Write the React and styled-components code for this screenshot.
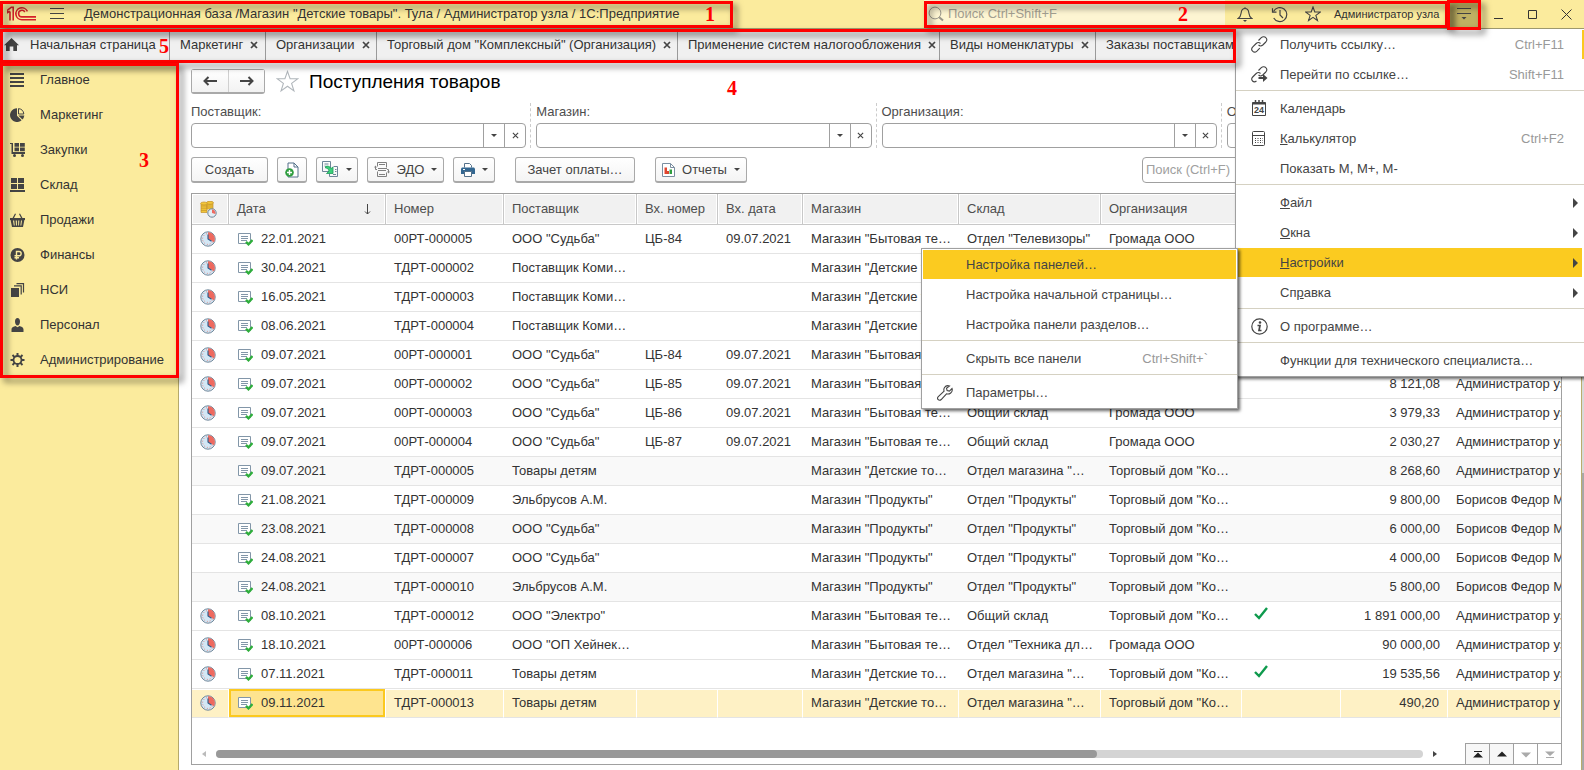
import React from 'react';
import styled, { createGlobalStyle } from 'styled-components';

const GlobalStyle = createGlobalStyle`
    * {
        box-sizing: border-box;
    }
    body {
        margin: 0;
        background: #fff;
        color: #333;
        font-family: "Liberation Sans", Arial, sans-serif;
        font-size: 13px;
        line-height: 16px;
    }
    button, input {
        font: inherit;
        color: inherit;
        margin: 0;
    }
    button {
        padding: 0;
    }
    svg {
        display: block;
        flex: none;
    }
`

const Page = styled.div`
    position: relative;
    display: flex;
    flex-direction: column;
    min-height: 100vh;
    overflow: hidden;
`

// red frames with numbers over the parts of the window
const Marker = styled.div`
    position: absolute;
    top: ${p => p.$top || 0}px;
    right: ${p => p.$right || 0}px;
    bottom: ${p => p.$bottom || 0}px;
    left: 0;
    z-index: 10;
    border: 3px solid #f00;
    filter: drop-shadow(4px 4px 3px rgba(0, 0, 0, 0.55));
    pointer-events: none;
`
const MarkerNumber = styled.span`
    position: absolute;
    top: ${p => p.$top}px;
    left: ${p => p.$left}px;
    z-index: 11;
    color: #f00;
    font-family: "Liberation Serif", "Times New Roman", serif;
    font-size: 20px;
    font-weight: bold;
    line-height: 20px;
`

/* title bar */
const TitleBar = styled.header`
    display: flex;
    justify-content: space-between;
    height: 29px;
    padding-right: 1px;
    background: #fbeb9d;
    border-bottom: 1px solid #a39d72;
`
const TitleLeft = styled.div`
    position: relative;
    display: flex;
    align-items: center;
    gap: 3px;
    width: 733px;
    padding-left: 7px;
    white-space: nowrap;
`
const TitleText = styled.h1`
    margin: 0 0 0 7px;
    font-size: 13px;
    font-weight: normal;
`
const TitleRight = styled.div`
    display: flex;
`
const Tools = styled.div`
    position: relative;
    display: flex;
    align-items: center;
    width: 524px;
`
const GlobalSearch = styled.label`
    display: flex;
    align-items: center;
    gap: 4px;
    flex: none;
    width: 301px;
    height: 28px;
    margin-right: 3px;
    padding-left: 4px;
    background: #fdf5d2;

    input {
        flex: 1;
        min-width: 0;
        padding: 0;
        border: 0;
        outline: 0;
        background: none;
    }
    input::placeholder {
        color: #a3a091;
    }
`
const BarButton = styled.button`
    display: flex;
    align-items: center;
    justify-content: center;
    flex: none;
    width: 34px;
    height: 28px;
    border: 0;
    background: ${p => p.$active ? '#bfb063' : 'none'};
`
const UserName = styled.button`
    padding: 0 4px;
    border: 0;
    background: none;
    font-size: 11px;
    white-space: nowrap;
`
const MenuHolder = styled.div`
    position: relative;
    height: 30px;
    margin-left: -1px;
`

/* open windows */
const TabBar = styled.nav`
    position: relative;
    height: 33px;
    background: #f0f0f0;
`
const TabList = styled.div`
    display: flex;
    height: 32px;
    overflow: hidden;
`
const Tab = styled.div`
    display: flex;
    align-items: center;
    gap: 7px;
    flex: none;
    width: ${p => p.$width}px;
    padding: 0 8px 0 ${p => p.$home ? 4 : 10}px;
    border-right: 1px solid #9a9a9a;
    white-space: nowrap;
`
const TabLink = styled.a`
    display: flex;
    flex: 1;
    align-items: center;
    gap: 11px;
    color: inherit;
    text-decoration: none;
`
const TabClose = styled.button`
    border: 0;
    background: none;
`

const Body = styled.div`
    display: flex;
    flex: 1;
`
const Sidebar = styled.nav`
    width: 179px;
    background: #fbeb9d;
    border-right: 1px solid #b5a96b;
`
const SectionList = styled.ul`
    position: relative;
    margin: 0;
    padding: 0;
    list-style: none;
`
const SectionLink = styled.a`
    display: flex;
    align-items: center;
    gap: 14px;
    height: 35px;
    padding-left: 10px;
    color: #333;
    text-decoration: none;
`

/* document list */
const Main = styled.main`
    position: relative;
    display: flex;
    flex: 1;
    flex-direction: column;
    min-width: 0;
    padding: 7px 19px 5px 12px;
`
const EdgeStrip = styled.div`
    width: 3px;
    background: linear-gradient(#d9d9d9 58%, #a8a8a8 58%);
    border-left: 1px solid #b9ad6c;
`
const HeadRow = styled.div`
    display: flex;
    align-items: center;
    height: 25px;
`
const NavButtons = styled.div`
    display: flex;
    height: 25px;
    border: 1px solid #a9a9a9;
    border-bottom: 2px solid #a9a9a9;
    border-radius: 3px;

    button {
        display: flex;
        align-items: center;
        justify-content: center;
        width: 36px;
        border: 0;
        background: linear-gradient(#fff, #f2f2f2);
    }
    button + button {
        border-left: 1px solid #d0d0d0;
    }
`
const StarButton = styled.button`
    margin: 0 10px 0 11px;
    border: 0;
    background: none;
`
const PageTitle = styled.h2`
    margin: 0;
    color: #000;
    font-size: 19px;
    font-weight: normal;
    line-height: 24px;
`
const Filters = styled.div`
    display: grid;
    grid-template-columns: repeat(4, 1fr);
    gap: 10px;
    margin-top: 9px;
`
const Filter = styled.div`
    position: relative;
    color: #4d4d4d;

    label {
        display: block;
        margin-bottom: 2px;
        line-height: 18px;
    }
    & + &::before {
        content: '';
        position: absolute;
        top: 0;
        bottom: 0;
        left: -6px;
        border-left: 1px dashed #ccc;
    }
`
const Combo = styled.div`
    display: flex;
    height: 25px;
    border: 1px solid #a0a0a0;
    border-radius: 4px;

    input {
        flex: 1;
        min-width: 0;
        padding: 0 6px;
        border: 0;
        outline: 0;
        background: none;
    }
    button {
        display: flex;
        align-items: center;
        justify-content: center;
        width: 21px;
        border: 0;
        border-left: 1px solid #a0a0a0;
        background: none;
    }
`
const Toolbar = styled.div`
    display: flex;
    height: 26px;
    margin-top: 9px;
`
const ToolButton = styled.button`
    display: flex;
    align-items: center;
    justify-content: center;
    gap: 7px;
    width: ${p => p.$width}px;
    margin-right: ${p => p.$space || 9}px;
    border: 1px solid #a9a9a9;
    border-bottom: 2px solid #a9a9a9;
    border-radius: 3px;
    background: linear-gradient(#fff, #f4f4f4);
    color: #444;
`
const ListSearch = styled.input`
    width: 420px;
    margin-left: auto;
    padding: 0 3px;
    border: 1px solid #a0a0a0;
    border-radius: 4px;

    &::placeholder {
        color: #a0a0a0;
    }
`
const TableFrame = styled.div`
    display: flex;
    flex: 1;
    flex-direction: column;
    justify-content: space-between;
    margin-top: 10px;
    border: 1px solid #a0a0a0;
    overflow: hidden;
`
const Table = styled.table`
    width: 100%;
    border-collapse: separate;
    border-spacing: 0;
    table-layout: fixed;

    th, td {
        padding: 0 0 0 8px;
        overflow: hidden;
        text-align: left;
        white-space: nowrap;
    }
    th {
        height: 31px;
        border-right: 1px solid #c8c8c8;
        border-bottom: 1px solid #c8c8c8;
        background: #f1f1f1;
        box-shadow: inset 0 0 0 1px #fff;
        color: #4d4d4d;
        font-weight: normal;
    }
    td {
        height: 29px;
        border-bottom: 1px solid #e4e4e4;
    }
`
const Row = styled.tr`
    background: ${p => p.$shaded ? '#f9f9f9' : '#fff'};

    ${p => p.$selected && `
        td {
            background: #fef1c5;
            border-right: 1px solid #fff;
            box-shadow: inset 0 1px 0 #fff;
        }
        td:nth-child(2) {
            background: #fee48f;
            box-shadow: inset 0 0 0 2px #fbc91f;
        }
    `}
`
const CellLine = styled.div`
    display: flex;
    align-items: center;
    justify-content: ${p => p.$spread ? 'space-between' : 'flex-start'};
    gap: 8px;
    padding-right: 14px;
`
const Amount = styled.div`
    padding-right: 8px;
    text-align: right;
`
const Paid = styled.div`
    padding: 0 0 5px 4px;
`
const ScrollRow = styled.div`
    display: flex;
    align-items: center;
    height: 21px;
    padding-left: 10px;
`
const ScrollTrack = styled.div`
    flex: 1;
    height: 8px;
    margin: 0 10px;
    border-radius: 4px;
    background: #d4d4d4;
`
const ScrollThumb = styled.div`
    width: 73%;
    height: 8px;
    border-radius: 4px;
    background: #999;
`
const PageButtons = styled.div`
    display: flex;
    margin-left: 28px;
    border-top: 1px solid #a0a0a0;

    button {
        display: flex;
        align-items: center;
        justify-content: center;
        width: 24px;
        height: 21px;
        border: 0;
        border-left: 1px solid #a0a0a0;
        background: #f7f7f7;
    }
    button:disabled {
        background: #fff;
    }
`

/* service menu */
const Menu = styled.div`
    position: absolute;
    top: 29px;
    right: 0;
    z-index: 2;
    width: 349px;
    padding-bottom: 1px;
    border: 1px solid #a0a0a0;
    border-top: 0;
    border-right: 0;
    background: #fff;
    box-shadow: 2px 2px 3px rgba(0, 0, 0, 0.6);

    &::after {
        content: '';
        position: absolute;
        top: 1px;
        right: 0;
        width: 2px;
        height: 29px;
        background: #fbc91f;
    }
`
const SubMenu = styled.div`
    position: absolute;
    top: 219px;
    right: 346px;
    width: 317px;
    padding-bottom: 1px;
    border: 1px solid #a0a0a0;
    background: #fff;
    box-shadow: 2px 2px 3px rgba(0, 0, 0, 0.6);
`
const MenuItem = styled.button`
    display: flex;
    align-items: center;
    width: calc(100% - ${p => p.$sub ? 2 : 3}px);
    height: 29px;
    margin: 1px ${p => p.$sub ? 1 : 2}px 0 1px;
    padding: 0 ${p => p.$sub ? 28 : p.$arrow ? 4 : 18}px 0 14px;
    border: 0;
    background: ${p => p.$active ? '#fbcb20' : 'none'};
    color: #444;
    text-align: left;
    white-space: nowrap;
`
const MenuIcon = styled.span`
    width: 29px;
`
const MenuText = styled.span`
    flex: 1;
`
const Shortcut = styled.span`
    color: #999;
`
const MenuLine = styled.hr`
    height: 1px;
    margin: 1px 0 3px;
    border: 0;
    background: #d5d1c2;
`

/* icons */
function Logo(){
    return (
        <svg width="30" height="16" viewBox="0 0 30 16" fill="none" stroke="#d3222a" strokeWidth="1.6">
            <path d="M0.5 4.2 4.4 1.2H6.2V14.5M3 5.4V14.5M0.5 4.2V6.6L3 5.2" />
            <path d="M20.4 5.4A6 6 0 1 0 15.2 13.8H29" />
            <path d="M17.8 6A3.3 3.3 0 1 0 15.2 10.9H29" />
        </svg>
    )
}

const Burger = () => (
    <svg width="14" height="12" viewBox="0 0 14 12" stroke="#444">
        <path d="M0 .5h14M0 5.5h14M0 10.5h14" />
    </svg>
)

const SearchIcon = () => (
    <svg width="16" height="16" viewBox="0 0 16 16" fill="none" stroke="#99968a">
        <circle cx="7" cy="7" r="5.9" />
        <path d="M11.2 11.2l3.8 3.4" strokeWidth="2" />
    </svg>
)

const Bell = () => (
    <svg width="16" height="16" viewBox="0 0 16 16" fill="none" stroke="#444" strokeWidth="1.1">
        <path d="M8 1.2v1.2M1.2 12.5h13.6c-2.2-1.3-2.6-2.8-2.9-5.4C11.6 4.2 10.2 2.500 8 2.500S4.400 4.200 4.100 7.100C3.800 9.700 3.400 11.200 1.200 12.500z" />
        <path d="M6 14h4l-2 2z" fill="#444" stroke="none" />
    </svg>
)

const History = () => (
    <svg width="17" height="17" viewBox="0 0 17 17" fill="none" stroke="#444" strokeWidth="1.2">
        <path d="M2.500 5.500A7 7 0 1 1 2.700 12" />
        <path d="M1.500 2.200v4h4M9 4v5l3 3" />
    </svg>
)

function Star({size, color}){
    return (
        <svg width={size} height={size} viewBox="0 0 24 24" fill="none" stroke={color} strokeWidth={24 / size * 1.1}>
            <path d="M12 1.500l2.700 7.500 8.100.1-6.500 4.900 2.400 7.800L12 17l-6.700 4.800 2.400-7.800-6.500-4.900 8.100-.1z" />
        </svg>
    )
}

const ServiceIcon = () => (
    <svg width="14" height="14" viewBox="0 0 14 14" stroke="#444">
        <path d="M0 1.500h14M0 6.500h14" />
        <path d="M4.500 10h5L7 12.500z" fill="#444" stroke="none" />
    </svg>
)

const WINDOW_PATHS = {
    minimize: 'M1 9.500h9',
    maximize: 'M1.500 1.500h8v8h-8z',
    close: 'M.5.5l10 10M10.500.5l-10 10',
}
const WindowIcon = ({kind}) => (
    <svg width="11" height="11" viewBox="0 0 11 11" fill="none" stroke="#333">
        <path d={WINDOW_PATHS[kind]} />
    </svg>
)

const Home = () => (
    <svg width="15" height="14" viewBox="0 0 15 14" fill="#444">
        <path d="M7.500 0 15 7.200H13V13H9.300V8.500H5.700V13H2V7.200H0L5 2.400z" />
    </svg>
)

const Cross = ({size, color = '#444', width = 1.7}) => (
    <svg width={size} height={size} viewBox="0 0 8 8" stroke={color} strokeWidth={width}>
        <path d="M1 1l6 6M7 1L1 7" />
    </svg>
)

const Caret = () => (
    <svg width="6" height="3" viewBox="0 0 6 3" fill="#444"><path d="M0 0h6L3 3z" /></svg>
)

const Arrow = ({left}) => (
    <svg width="15" height="10" viewBox="0 0 15 10" fill="none" stroke="#444" strokeWidth="2">
        <path d={left ? 'M14 5H2M5.500 1 1.500 5l4 4' : 'M1 5h12M9.500 1l4 4-4 4'} />
    </svg>
)

const SECTION_ICONS = {
    main: <path d="M0 0h14v2H0zM0 4h14v2H0zM0 8h14v2H0zM0 12h14v2H0z" />,
    pie: <>
        <path d="M7 .2A6.900 6.900 0 1 0 11.600 12.200L7 7.700z" />
        <path d="M8.500.6a6 6 0 0 1 5.300 5.400H8.500z" fill="none" stroke="#444" />
        <path d="M8.300 7.400h6a6.500 6.500 0 0 1-1.900 4.100z" />
    </>,
    cart: <>
        <path d="M0 0h3v9h12v2H1.500V1H0zM4.500 0h4.500v3.800H4.500zM10 0h4.800v3.800H10zM4.500 4.600h4.500V8.200H4.500zM10 4.600h4.800V8.200H10z" />
        <circle cx="4.500" cy="12.500" r="1.500" /><circle cx="12.500" cy="12.500" r="1.500" />
    </>,
    store: <path d="M1 0h6v5H1zM8 0h6v5H8zM1 6h6v5H1zM8 6h6v5H8zM0 12h15v2H0z" />,
    basket: <path fillRule="evenodd" d="M0 5h2.500L5 .5l1 .6L4 5h7L9 1.100l1-.6L12.500 5H15v2h-.6L13 14H2L.6 7H0zM3 7.500l.8 5h.9l-.5-5zM5.700 7.500l.3 5h.9v-5zM8.200 7.500v5H9l.3-5zM11 7.500l-.6 5h.9l.7-5z" />,
    ruble: <>
        <circle cx="7.500" cy="7" r="7" />
        <path d="M6.500 11.500V3.500H9a2.100 2.100 0 0 1 0 4.300H4.500M4.500 9.800h4.500" fill="none" stroke="#fbeb9d" strokeWidth="1.400" />
    </>,
    books: <>
        <path d="M1 5h8v9H1z" />
        <path d="M4 2.800h7.200V11.500M6.500.6h7v9" fill="none" stroke="#444" strokeWidth="1.200" />
    </>,
    person: <path d="M5 3.500C5 1.200 6 0 7.500 0S10 1.200 10 3.500 9 7.500 7.500 7.500 5 5.500 5 3.500zM1.500 14v-2.500C1.500 9 4 8.500 5.500 8l2 1.200 2-1.200c1.500.5 4 1 4 3.500V14z" />,
    gear: <>
        <circle cx="7.500" cy="7" r="4" fill="none" stroke="#444" strokeWidth="1.800" />
        <path d="M7.500 0v3M7.500 11v3M.5 7h3M11.500 7h3M2.500 2l2.100 2.100M10.400 9.900l2.100 2.100M12.500 2l-2.100 2.100M4.600 9.900 2.500 12" stroke="#444" strokeWidth="2" />
    </>,
}
const SectionIcon = ({name}) => (
    <svg width="16" height="14" viewBox="0 0 16 14" fill="#444">{SECTION_ICONS[name]}</svg>
)

const Clock = () => (
    <svg width="16" height="16" viewBox="0 0 16 16">
        <circle cx="8" cy="8" r="7.200" fill="#d3e7f5" stroke="#72889a" />
        <path d="M8 8V1.200A6.800 6.800 0 0 1 14 11.200z" fill="#f0685d" />
        <circle cx="8" cy="8" r="5.400" fill="none" stroke="#dd7a74" strokeDasharray=".9 1.930" />
        <path d="M8 3.500V8l3.500 2.200" fill="none" stroke="#2b5a88" strokeWidth="1.100" />
    </svg>
)

const Coins = () => (
    <svg width="17" height="17" viewBox="0 0 17 17">
        <g fill="#f3c73a" stroke="#c3922b" strokeWidth=".7">
            <path d="M1 2.500h6v9H1z" /><path d="M7 1h6v7H7z" />
            <ellipse cx="4" cy="2.500" rx="3.300" ry="1.500" /><ellipse cx="10" cy="1.800" rx="3.300" ry="1.500" />
            <path d="M1 5h6M1 7.200h6M1 9.400h6M7 4h6M7 6h6" />
        </g>
        <circle cx="12" cy="12" r="4.200" fill="#e3edf4" stroke="#6d8598" />
        <path d="M12 12V8.500A3.500 3.500 0 0 1 15.300 13z" fill="#ee6a60" />
    </svg>
)

const Posted = () => (
    <svg width="16" height="13" viewBox="0 0 16 13" fill="none">
        <path d="M1.500.5h12v10h-12z" fill="#fff" stroke="#8296a8" />
        <path d="M4 3.500h7M4 5.500h7M4 7.500h6" stroke="#8296a8" />
        <path d="M9 8.800l2.500 2.500L15.500 7" stroke="#2fae3c" strokeWidth="2.400" />
    </svg>
)

const AddDoc = () => (
    <svg width="14" height="16" viewBox="0 0 14 16" fill="none">
        <path d="M3 1h6l4 4v10H3z" fill="#fff" stroke="#54718a" />
        <path d="M9 1v4h4" stroke="#54718a" />
        <circle cx="4.500" cy="10.500" r="4.300" fill="#2f9e3f" />
        <path d="M4.500 8v5M2 10.500h5" stroke="#fff" strokeWidth="1.400" />
    </svg>
)

const BaseOn = () => (
    <svg width="17" height="17" viewBox="0 0 17 17" fill="none" stroke="#6d8598">
        <path d="M.5.5h8v10h-8zM2.500 3h4M2.500 5h1" />
        <path d="M11.500 5.500h4v10h-8v-3M13 8.500h1.500M13 10.500h1.500M11 13.500h3" />
        <path d="M3.500 5.500c2.500-1 4.500 0 5.500 2L11 6v6.500H4.500L7 10C6.500 8 5.500 7 3.500 7z" fill="#3bd07a" stroke="#1f9a5a" strokeWidth=".8" />
    </svg>
)

const Edo = () => (
    <svg width="16" height="15" viewBox="0 0 16 15" fill="none" stroke="#808080">
        <path d="M3.500 4.500v-4h9v5M12.500 10.500v4h-9v-5M5 2.500h6M5 12.500h6M4 6.500h9M4 8.500h8" />
        <path d="M3 7.500H1.500V5M13 7.500h1.500V10" />
        <path d="M0 5.500h3L1.500 3.500zM13 9.500h3l-1.500 2z" fill="#808080" stroke="none" />
    </svg>
)

const Printer = () => (
    <svg width="14" height="14" viewBox="0 0 14 14">
        <path d="M3.500 4.500v-4h5l2 2v2" fill="#fff" stroke="#54718a" />
        <path d="M0 5.500 1 4.500h12l1 1V11H0z" fill="#336791" />
        <path d="M3.500 8.500h7v5h-7z" fill="#fff" stroke="#54718a" />
        <path d="M2 6.500h2" stroke="#fff" />
    </svg>
)

const Report = () => (
    <svg width="13" height="14" viewBox="0 0 13 14" fill="none">
        <path d="M.5.5h8l4 4v9H.5z" fill="#fff" stroke="#7a8ea0" />
        <path d="M8.500.5v4h4" stroke="#7a8ea0" />
        <path d="M2.500 11V4.500h2.500V11z" fill="#e0452f" /><path d="M5 11V8h2v3z" fill="#d8452f" /><path d="M7.500 11V6.500H10V11z" fill="#2f9e3f" />
    </svg>
)

const Tick = () => (
    <svg width="14" height="13" viewBox="0 0 14 13" fill="none" stroke="#0e9a4d" strokeWidth="2.400">
        <path d="M1 7l4 4L13 1" />
    </svg>
)

const SortArrow = () => (
    <svg width="7" height="11" viewBox="0 0 7 11" fill="none" stroke="#444">
        <path d="M3.500 0v10M1 7.500l2.500 2.500L6 7.500" />
    </svg>
)

const Triangle = ({left, color}) => (
    <svg width="4" height="6" viewBox="0 0 4 6" fill={color}>
        <path d={left ? 'M4 0v6L0 3z' : 'M0 0v6l4-3z'} />
    </svg>
)

const MenuArrow = () => (
    <svg width="5" height="10" viewBox="0 0 5 10" fill="#444"><path d="M0 0v10l5-5z" /></svg>
)

const PAGE_PATHS = {
    first: 'M1 0h8v1H1zM0 6.500 5 1.500l5 5z',
    prev: 'M0 5.500 5 .5l5 5z',
    next: 'M0 1.500h10l-5 5z',
    last: 'M0 .5h10l-5 4.500zM1 6h8v1H1z',
}

const Link = ({go}) => (
    <svg width="17" height="17" viewBox="0 0 17 17" fill="none" stroke="#444" strokeWidth="1.100">
        <path d="M7.500 4.500l2.800-2.800c1.600-1.600 3.600-1 4.500 0 1.200 1.200 1.200 3 0 4.300l-3 3c-1.300 1.200-3 1.200-4.300 0" />
        <path d={go ? 'M9.500 7.500c-1.200-1.200-3-1.200-4.300 0l-3.500 3.500c-1.300 1.300-1.200 2.800-.2 4 .9.900 2.500 1.200 4 0' : 'M9.500 7.500c-1.200-1.200-3-1.200-4.300 0l-3.400 3.400c-1.300 1.300-1.200 3.200-.2 4.200 1 1 3 1.200 4.300 0l2.900-2.900'} />
        {go && <path d="M7.500 11H12V8l4.500 4-4.500 4v-3H7.500z" fill="#444" stroke="none" />}
    </svg>
)

const CalendarIcon = () => (
    <svg width="16" height="17" viewBox="0 0 16 17" fill="none" stroke="#444">
        <path d="M1.500 2.500h13v13h-13z" />
        <path d="M1.500 3.500h13" strokeWidth="2" />
        <path d="M4.500 0v3M8 0v3M11.500 0v3" strokeWidth="1.500" />
        <text x="8" y="13" textAnchor="middle" fill="#444" stroke="none" fontSize="9" fontWeight="bold">24</text>
    </svg>
)

const CalcIcon = () => (
    <svg width="15" height="16" viewBox="0 0 15 16" fill="none" stroke="#444">
        <rect x="1.500" y=".5" width="12" height="14" rx="1" />
        <path d="M1.500 4.500h12" />
        <path d="M4 7.500h8M4 9.500h8M4 11.500h8" strokeDasharray="1 1.500" />
    </svg>
)

const InfoIcon = () => (
    <svg width="17" height="17" viewBox="0 0 17 17" fill="none" stroke="#444" strokeWidth="1.200">
        <circle cx="8.500" cy="8.500" r="7.700" />
        <path d="M6.500 7.500h2.500l-1 5h2.500" strokeWidth="1.700" />
        <circle cx="9" cy="4.500" r="1.300" fill="#444" stroke="none" />
    </svg>
)

const Wrench = () => (
    <svg width="16" height="16" viewBox="0 0 16 16" fill="none" stroke="#444" strokeWidth="1.100">
        <path d="M12.500 1C10.500.3 8.500 1 7.500 2.500c-.8 1.200-.8 2.500-.4 3.700L1.300 11.700c-1 1-.8 2.200-.1 2.900s2 .9 3-.1l5.300-5.700c1.500.5 3 .2 4.200-.8 1.400-1.200 1.800-3 1.300-4.500l-2.600 2.600-2.300-.6-.6-2.200z" />
    </svg>
)

/* data */
const tabs = [
    {name: 'Маркетинг', width: 96},
    {name: 'Организации', width: 111},
    {name: 'Торговый дом "Комплексный" (Организация)', width: 301},
    {name: 'Применение систем налогообложения', width: 262},
    {name: 'Виды номенклатуры', width: 156},
    {name: 'Заказы поставщикам', width: 170},
]

const sections = [
    ['main', 'Главное'],
    ['pie', 'Маркетинг'],
    ['cart', 'Закупки'],
    ['store', 'Склад'],
    ['basket', 'Продажи'],
    ['ruble', 'Финансы'],
    ['books', 'НСИ'],
    ['person', 'Персонал'],
    ['gear', 'Администрирование'],
]

const filters = ['Поставщик:', 'Магазин:', 'Организация:', 'Операция:']

const APPLIANCES = 'Магазин "Бытовая те…'
const KIDS = 'Магазин "Детские то…'
const FOOD = 'Магазин "Продукты"'
const TRADE = 'Торговый дом "Ко…'
const ADMIN = 'Администратор узла'
const BORISOV = 'Борисов Федор Михайлович'

// clock, date, number, supplier, incoming number, incoming date, shop, store, company, paid, sum, author
const documents = [
    [1, '22.01.2021', '00РТ-000005', 'ООО "Судьба"', 'ЦБ-84', '09.07.2021', APPLIANCES, 'Отдел "Телевизоры"', 'Громада ООО', 0, '', ''],
    [1, '30.04.2021', 'ТДРТ-000002', 'Поставщик Коми…', '', '', KIDS, '', '', 0, '', ''],
    [1, '16.05.2021', 'ТДРТ-000003', 'Поставщик Коми…', '', '', KIDS, '', '', 0, '', ''],
    [1, '08.06.2021', 'ТДРТ-000004', 'Поставщик Коми…', '', '', KIDS, '', '', 0, '', ''],
    [1, '09.07.2021', '00РТ-000001', 'ООО "Судьба"', 'ЦБ-84', '09.07.2021', APPLIANCES, '', '', 0, '', ''],
    [1, '09.07.2021', '00РТ-000002', 'ООО "Судьба"', 'ЦБ-85', '09.07.2021', APPLIANCES, '', '', 0, '8 121,08', ADMIN],
    [1, '09.07.2021', '00РТ-000003', 'ООО "Судьба"', 'ЦБ-86', '09.07.2021', APPLIANCES, 'Общий склад', 'Громада ООО', 0, '3 979,33', ADMIN],
    [1, '09.07.2021', '00РТ-000004', 'ООО "Судьба"', 'ЦБ-87', '09.07.2021', APPLIANCES, 'Общий склад', 'Громада ООО', 0, '2 030,27', ADMIN],
    [0, '09.07.2021', 'ТДРТ-000005', 'Товары детям', '', '', KIDS, 'Отдел магазина "…', TRADE, 0, '8 268,60', ADMIN],
    [0, '21.08.2021', 'ТДРТ-000009', 'Эльбрусов А.М.', '', '', FOOD, 'Отдел "Продукты"', TRADE, 0, '9 800,00', BORISOV],
    [0, '23.08.2021', 'ТДРТ-000008', 'ООО "Судьба"', '', '', FOOD, 'Отдел "Продукты"', TRADE, 0, '6 000,00', BORISOV],
    [0, '24.08.2021', 'ТДРТ-000007', 'ООО "Судьба"', '', '', FOOD, 'Отдел "Продукты"', TRADE, 0, '4 000,00', BORISOV],
    [0, '24.08.2021', 'ТДРТ-000010', 'Эльбрусов А.М.', '', '', FOOD, 'Отдел "Продукты"', TRADE, 0, '5 800,00', BORISOV],
    [1, '08.10.2021', 'ТДРТ-000012', 'ООО "Электро"', '', '', APPLIANCES, 'Общий склад', TRADE, 1, '1 891 000,00', ADMIN],
    [1, '18.10.2021', '00РТ-000006', 'ООО "ОП Хейнек…', '', '', APPLIANCES, 'Отдел "Техника дл…', 'Громада ООО', 0, '90 000,00', ADMIN],
    [1, '07.11.2021', 'ТДРТ-000011', 'Товары детям', '', '', KIDS, 'Отдел магазина "…', TRADE, 1, '19 535,56', ADMIN],
    [1, '09.11.2021', 'ТДРТ-000013', 'Товары детям', '', '', KIDS, 'Отдел магазина "…', TRADE, 0, '490,20', ADMIN],
]
const shadedRows = [8, 10, 12]
const selectedRow = 16

const columnWidths = [37, 157, 118, 133, 81, 85, 156, 142, 141, 99, 107]

const serviceMenu = [
    {icon: <Link />, text: 'Получить ссылку…', keys: 'Ctrl+F11'},
    {icon: <Link go />, text: 'Перейти по ссылке…', keys: 'Shift+F11'},
    null,
    {icon: <CalendarIcon />, text: <>Кален<u>д</u>арь</>},
    {icon: <CalcIcon />, text: <><u>К</u>алькулятор</>, keys: 'Ctrl+F2'},
    {text: 'Показать M, M+, M-'},
    null,
    {text: <><u>Ф</u>айл</>, arrow: true},
    {text: <><u>О</u>кна</>, arrow: true},
    {text: <><u>Н</u>астройки</>, arrow: true, active: true},
    {text: <>Сп<u>р</u>авка</>, arrow: true},
    null,
    {icon: <InfoIcon />, text: 'О программе…'},
    null,
    {text: 'Функции для технического специалиста…'},
]

const settingsMenu = [
    {text: 'Настройка панелей…', active: true},
    {text: 'Настройка начальной страницы…'},
    {text: 'Настройка панели разделов…'},
    null,
    {text: 'Скрыть все панели', keys: 'Ctrl+Shift+`'},
    null,
    {icon: <Wrench />, text: 'Параметры…'},
]

function MenuItems({items, sub}){
    return items.map((item, idx) => item ? (
        <MenuItem key={idx} type="button" role="menuitem" $sub={sub} $active={item.active} $arrow={item.arrow}>
            <MenuIcon>{item.icon}</MenuIcon>
            <MenuText>{item.text}</MenuText>
            {item.keys && <Shortcut>{item.keys}</Shortcut>}
            {item.arrow && <MenuArrow />}
        </MenuItem>
    ) : <MenuLine key={idx} />)
}

function Header(){
    return (
        <TitleBar>
            <TitleLeft>
                <Logo />
                <BarButton type="button" aria-label="Меню функций"><Burger /></BarButton>
                <TitleText>Демонстрационная база /Магазин "Детские товары". Тула / Администратор узла / 1С:Предприятие</TitleText>
                <Marker $top={1} />
                <MarkerNumber $top={4} $left={705}>1</MarkerNumber>
            </TitleLeft>
            <TitleRight>
                <Tools>
                    <GlobalSearch>
                        <SearchIcon />
                        <input type="text" placeholder="Поиск Ctrl+Shift+F" aria-label="Поиск" />
                    </GlobalSearch>
                    <BarButton type="button" aria-label="Оповещения"><Bell /></BarButton>
                    <BarButton type="button" aria-label="История"><History /></BarButton>
                    <BarButton type="button" aria-label="Избранное"><Star size={16} color="#444" /></BarButton>
                    <UserName type="button">Администратор узла</UserName>
                    <Marker $top={1} />
                    <MarkerNumber $top={4} $left={254}>2</MarkerNumber>
                </Tools>
                <MenuHolder>
                    <BarButton type="button" $active aria-label="Сервис и настройки"><ServiceIcon /></BarButton>
                    <Marker />
                </MenuHolder>
                <BarButton type="button" aria-label="Свернуть"><WindowIcon kind="minimize" /></BarButton>
                <BarButton type="button" aria-label="Развернуть"><WindowIcon kind="maximize" /></BarButton>
                <BarButton type="button" aria-label="Закрыть"><WindowIcon kind="close" /></BarButton>
            </TitleRight>
        </TitleBar>
    )
}

function DocumentTable(){
    return (
        <TableFrame>
            <Table>
                <colgroup>
                    {columnWidths.map((width, idx) => <col key={idx} width={width} />)}
                    <col />
                </colgroup>
                <thead>
                    <tr>
                        <th><Coins /></th>
                        <th><CellLine $spread>Дата <SortArrow /></CellLine></th>
                        <th>Номер</th>
                        <th>Поставщик</th>
                        <th>Вх. номер</th>
                        <th>Вх. дата</th>
                        <th>Магазин</th>
                        <th>Склад</th>
                        <th>Организация</th>
                        <th></th>
                        <th></th>
                        <th></th>
                    </tr>
                </thead>
                <tbody>
                    {documents.map(([clock, date, number, supplier, inNumber, inDate, shop, store, company, paid, sum, author], idx) => (
                        <Row key={number} $shaded={shadedRows.includes(idx)} $selected={idx === selectedRow}>
                            <td>{clock ? <Clock /> : null}</td>
                            <td><CellLine><Posted /> {date}</CellLine></td>
                            <td>{number}</td>
                            <td>{supplier}</td>
                            <td>{inNumber}</td>
                            <td>{inDate}</td>
                            <td>{shop}</td>
                            <td>{store}</td>
                            <td>{company}</td>
                            <td>{paid ? <Paid><Tick /></Paid> : null}</td>
                            <td><Amount>{sum}</Amount></td>
                            <td>{author}</td>
                        </Row>
                    ))}
                </tbody>
            </Table>
            <ScrollRow>
                <Triangle left color="#bbb" />
                <ScrollTrack><ScrollThumb /></ScrollTrack>
                <Triangle color="#444" />
                <PageButtons>
                    {Object.keys(PAGE_PATHS).map((name, idx) => (
                        <button key={name} type="button" disabled={idx > 1} aria-label={name}>
                            <svg width="10" height="7" viewBox="0 0 10 7" fill={idx > 1 ? '#aaa' : '#222'}>
                                <path d={PAGE_PATHS[name]} />
                            </svg>
                        </button>
                    ))}
                </PageButtons>
            </ScrollRow>
        </TableFrame>
    )
}

function App(){
    return (
        <Page>
            <GlobalStyle />
            <Header />
            <TabBar>
                <TabList>
                    <Tab $width={170} $home>
                        <TabLink href="#home"><Home /> Начальная страница</TabLink>
                    </Tab>
                    {tabs.map(tab => (
                        <Tab key={tab.name} $width={tab.width}>
                            <TabLink href="#tab">{tab.name}</TabLink>
                            <TabClose type="button" aria-label={'Закрыть ' + tab.name}><Cross size={8} /></TabClose>
                        </Tab>
                    ))}
                </TabList>
                <Marker $right={348} $bottom={-1} />
                <MarkerNumber $top={7} $left={159}>5</MarkerNumber>
            </TabBar>
            <Body>
                <Sidebar>
                    <SectionList>
                        {sections.map(([icon, name]) => (
                            <li key={name}>
                                <SectionLink href="#section"><SectionIcon name={icon} />{name}</SectionLink>
                            </li>
                        ))}
                        <Marker as="li" $top={1} $right={-1} $bottom={-1} />
                        <MarkerNumber as="li" $top={88} $left={139}>3</MarkerNumber>
                    </SectionList>
                </Sidebar>
                <Main>
                    <HeadRow>
                        <NavButtons>
                            <button type="button" aria-label="Назад"><Arrow left /></button>
                            <button type="button" aria-label="Вперед"><Arrow /></button>
                        </NavButtons>
                        <StarButton type="button" aria-label="В избранное"><Star size={23} color="#b0b6bb" /></StarButton>
                        <PageTitle>Поступления товаров</PageTitle>
                        <MarkerNumber $top={16} $left={548}>4</MarkerNumber>
                    </HeadRow>
                    <Filters>
                        {filters.map((name, idx) => (
                            <Filter key={name}>
                                <label htmlFor={'filter' + idx}>{name}</label>
                                <Combo>
                                    <input id={'filter' + idx} type="text" />
                                    <button type="button" aria-label="Выбрать"><Caret /></button>
                                    <button type="button" aria-label="Очистить"><Cross size={7} width={1.3} /></button>
                                </Combo>
                            </Filter>
                        ))}
                    </Filters>
                    <Toolbar>
                        <ToolButton type="button" $width={77}>Создать</ToolButton>
                        <ToolButton type="button" $width={30} aria-label="Добавить"><AddDoc /></ToolButton>
                        <ToolButton type="button" $width={42} aria-label="Создать на основании"><BaseOn /><Caret /></ToolButton>
                        <ToolButton type="button" $width={77}><Edo />ЭДО<Caret /></ToolButton>
                        <ToolButton type="button" $width={42} $space={20} aria-label="Печать"><Printer /><Caret /></ToolButton>
                        <ToolButton type="button" $width={120} $space={20}>Зачет оплаты…</ToolButton>
                        <ToolButton type="button" $width={92}><Report />Отчеты<Caret /></ToolButton>
                        <ListSearch type="text" placeholder="Поиск (Ctrl+F)" aria-label="Поиск в списке" />
                    </Toolbar>
                    <DocumentTable />
                </Main>
                <EdgeStrip />
            </Body>
            <Menu role="menu">
                <MenuItems items={serviceMenu} />
                <SubMenu role="menu">
                    <MenuItems items={settingsMenu} sub />
                </SubMenu>
            </Menu>
        </Page>
    )
}

export default App;
